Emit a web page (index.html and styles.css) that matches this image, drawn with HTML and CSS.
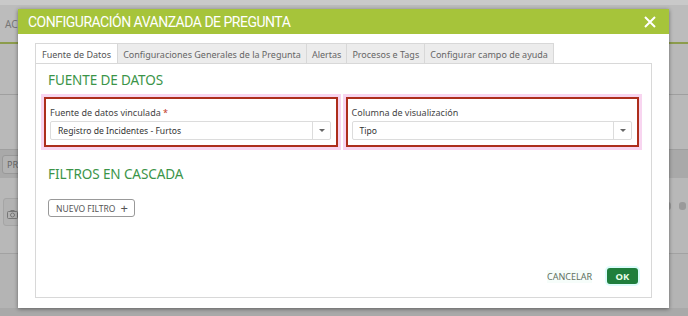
FILE: index.html
```html
<!DOCTYPE html>
<html lang="en">
<head>
    <meta charset="UTF-8">
    <title>Configuración avanzada de pregunta</title>
    <link rel="stylesheet" href="styles.css">
</head>
<body>
    <div class="page">
        <div class="page-top"></div>
        <div class="page-head"><span>AC</span></div>
        <div class="page-row"></div>
        <div class="page-row tall"></div>
        <div class="page-bar"><span class="chip">PR</span></div>
        <div class="page-tools">
            <span class="tool">
                <svg width="11" height="9" viewBox="0 0 11 9"><rect x="0.5" y="1.5" width="10" height="7" rx="1" fill="none" stroke="#777"/><circle cx="5.5" cy="5" r="2" fill="none" stroke="#777"/><rect x="3.5" y="0" width="4" height="2" fill="#777"/></svg>
            </span>
            <span class="tool-right">
                <span class="dot"></span><span class="dot"></span>
            </span>
        </div>
        <div class="page-rest"></div>
    </div>

    <div class="modal">
        <div class="modal-header">
            <span class="modal-title">CONFIGURACIÓN AVANZADA DE PREGUNTA</span>
            <svg class="close" width="12" height="12" viewBox="0 0 12 12"><path d="M1 1L11 11M11 1L1 11" stroke="#fff" stroke-width="2"/></svg>
        </div>
        <div class="modal-body">
            <div class="tabs">
                <span class="tab active">Fuente de Datos</span>
                <span class="tab">Configuraciones Generales de la Pregunta</span>
                <span class="tab">Alertas</span>
                <span class="tab">Procesos e Tags</span>
                <span class="tab">Configurar campo de ayuda</span>
            </div>
            <div class="panel">
                <h3 class="section-title">FUENTE DE DATOS</h3>
                <div class="fields">
                    <div class="field">
                        <label>Fuente de datos vinculada <span class="req">*</span></label>
                        <div class="select">
                            <span>Registro de Incidentes - Furtos</span>
                            <span class="arrow"></span>
                        </div>
                    </div>
                    <div class="field">
                        <label>Columna de visualización</label>
                        <div class="select">
                            <span>Tipo</span>
                            <span class="arrow"></span>
                        </div>
                    </div>
                </div>
                <h3 class="section-title second">FILTROS EN CASCADA</h3>
                <button class="btn-outline">NUEVO FILTRO <span class="plus">+</span></button>
                <div class="actions">
                    <button class="btn-link">CANCELAR</button>
                    <button class="btn-ok">OK</button>
                </div>
            </div>
        </div>
    </div>
</body>
</html>
```
FILE: styles.css
```css
body { margin: 0; width: 688px; height: 316px; overflow: hidden; background: #b6b6b6; font-family: "Noto Sans", "Open Sans", sans-serif; position: relative; }

/* dimmed page behind the dialog */
.page { display: flex; flex-direction: column; height: 316px; }
.page-top { height: 5px; background: #c9c9c9; }
.page-head { height: 37px; background: #bcbcbc; border-bottom: 2px solid #8c9c4c; display: flex; align-items: center; padding-left: 5px; }
.page-head span { font-size: 10px; color: #777; }
.page-row { height: 50px; border-bottom: 1px solid #9f9f9f; background: #b9b9b9; }
.page-row.tall { height: 54px; }
.page-bar { height: 28px; background: #a9a9a9; display: flex; align-items: center; padding-left: 2px; }
.chip { font-size: 9px; color: #666; border: 1px solid #999; border-radius: 3px; padding: 2px 4px; background: #b2b2b2; }
.page-tools { height: 76px; background: #b8b8b8; border-bottom: 1px solid #a2a2a2; display: flex; align-items: flex-start; justify-content: space-between; padding-top: 20px; box-sizing: border-box; }
.tool { margin-left: 3px; border: 1px solid #a5a5a5; border-radius: 3px; padding: 3px 3px 1px; background: #b2b2b2; }
.tool-right { display: flex; gap: 8px; margin-right: 2px; padding-top: 4px; }
.dot { width: 7px; height: 8px; border-radius: 3px; background: #9a9a9a; }
.page-rest { flex: 1; background: #b4b4b4; border-bottom: 8px solid #a9a9a9; }

/* dialog */
.modal { position: absolute; left: 18px; top: 9px; width: 651px; height: 299px; background: #fff; box-shadow: 0 1px 4px rgba(0,0,0,0.45); }
.modal-header { height: 25px; background: #a6c43a; display: flex; align-items: center; justify-content: space-between; padding: 0 13px 0 10px; }
.modal-title { color: #fff; font-family: Roboto, "Noto Sans", sans-serif; font-size: 14px; letter-spacing: -0.5px; }
.modal-body { padding: 9px 17px 0; }
.tabs { display: flex; }
.tab { font-size: 9px; color: #666; padding: 4px 5px 3px; background: #ececec; border: 1px solid #d8d8d8; border-left: none; border-bottom: none; height: 12px; }
.tab.active { background: #fff; border-left: 1px solid #d8d8d8; padding: 4px 6px 3px; color: #555; }
.panel { border: 1px solid #d8d8d8; height: 233px; padding: 0 12px; display: flex; flex-direction: column; position: relative; }
.section-title { margin: 7px 0 0; font-size: 13.5px; font-weight: normal; color: #3b9448; letter-spacing: -0.1px; }
.section-title.second { margin-top: 18px; }
.fields { display: flex; gap: 8px; margin: 8px 0 0 -4px; }
.field { width: 296px; height: 50px; border: 2px solid #ad2e1c; box-shadow: 0 0 0 3px #f8d5f0; padding: 7px 5px 0 4px; box-sizing: border-box; display: flex; flex-direction: column; }
.field label { font-size: 9px; color: #444; margin-bottom: 2px; }
.req { color: #c0392b; }
.select { height: 17px; border: 1px solid #dcdcdc; border-radius: 2px; display: flex; align-items: center; justify-content: space-between; font-size: 8.6px; color: #333; padding-left: 7px; }
.arrow { width: 17px; height: 17px; border-left: 1px solid #dcdcdc; position: relative; }
.arrow::after { content: ""; position: absolute; left: 6px; top: 7px; border-left: 3px solid transparent; border-right: 3px solid transparent; border-top: 3px solid #666; }
.btn-outline { align-self: flex-start; margin-top: 16px; height: 18px; padding: 0 6px 0 7px; border: 1px solid #999; border-radius: 3px; background: #fff; font-family: inherit; font-size: 8.5px; color: #555; display: flex; align-items: center; gap: 5px; }
.plus { font-size: 13px; line-height: 1; color: #555; }
.actions { margin-top: auto; margin-bottom: 13px; display: flex; justify-content: flex-end; align-items: center; gap: 15px; padding-right: 1px; }
.btn-link { border: none; background: #f6fdfa; font-family: inherit; font-size: 9px; color: #607060; padding: 0; }
.btn-ok { border: none; background: #1f7e3c; color: #e8ffe8; font-family: inherit; font-size: 9.5px; font-weight: bold; width: 31px; height: 16px; border-radius: 3px; box-shadow: 0 0 0 2px #dcfcfb; }
```
